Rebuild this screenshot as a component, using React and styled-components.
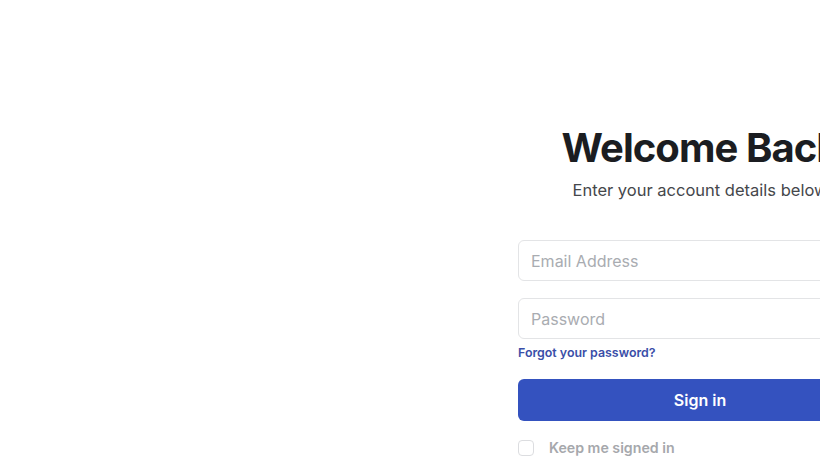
import React from "react";
import styled, { createGlobalStyle } from "styled-components";

const Global = createGlobalStyle`
  html, body { margin: 0; padding: 0; background: #ffffff; overflow: hidden; }
  body { font-family: Inter, "Noto Sans", sans-serif; }
  * { box-sizing: border-box; }
`;

const Page = styled.div`
  display: flex;
  width: 1400px;
  min-height: 461px;
`;

const Aside = styled.div`
  width: 518px;
  flex-shrink: 0;
`;

const FormPanel = styled.form`
  width: 364px;
  flex-shrink: 0;
  padding-top: 124px;
  display: flex;
  flex-direction: column;
`;

const Title = styled.h1`
  margin: 0;
  font-size: 40px;
  line-height: 48px;
  font-weight: 700;
  letter-spacing: -0.95px;
  color: #1b1d21;
  text-align: center;
`;

const Subtitle = styled.p`
  margin: 6px 0 0;
  font-size: 16.5px;
  line-height: 24px;
  color: #45474b;
  text-align: center;
`;

const Field = styled.input`
  height: 41px;
  width: 100%;
  margin-top: ${(p) => p.$mt}px;
  padding: 0 12px;
  border: 1px solid #e3e4e6;
  border-radius: 6px;
  font-family: inherit;
  font-size: 16px;
  color: #1b1d21;
  background: #fff;
  outline: none;
  &::placeholder { color: #a9acb1; }
`;

const Forgot = styled.a`
  margin-top: 6px;
  align-self: flex-start;
  font-size: 12.4px;
  line-height: 15px;
  font-weight: 600;
  color: #3a4ea8;
  text-decoration: none;
`;

const SignIn = styled.button`
  margin-top: 19px;
  height: 42px;
  width: 100%;
  border: none;
  border-radius: 6px;
  background: #3452bf;
  color: #ffffff;
  font-family: inherit;
  font-size: 16px;
  font-weight: 600;
`;

const KeepRow = styled.label`
  margin-top: 18px;
  display: flex;
  align-items: center;
  gap: 15px;
  font-size: 14.2px;
  font-weight: 600;
  color: #a6a8ac;
`;

const Box = styled.span`
  width: 16px;
  height: 16px;
  border: 1px solid #dcdde0;
  border-radius: 4px;
  background: #fff;
`;

export default function App() {
  return (
    <>
      <Global />
      <Page>
        <Aside />
        <FormPanel onSubmit={(e) => e.preventDefault()}>
          <Title>Welcome Back</Title>
          <Subtitle>Enter your account details below</Subtitle>
          <Field $mt={38} type="email" placeholder="Email Address" />
          <Field $mt={17} type="password" placeholder="Password" />
          <Forgot href="#">Forgot your password?</Forgot>
          <SignIn type="submit">Sign in</SignIn>
          <KeepRow>
            <Box />
            Keep me signed in
          </KeepRow>
        </FormPanel>
      </Page>
    </>
  );
}
